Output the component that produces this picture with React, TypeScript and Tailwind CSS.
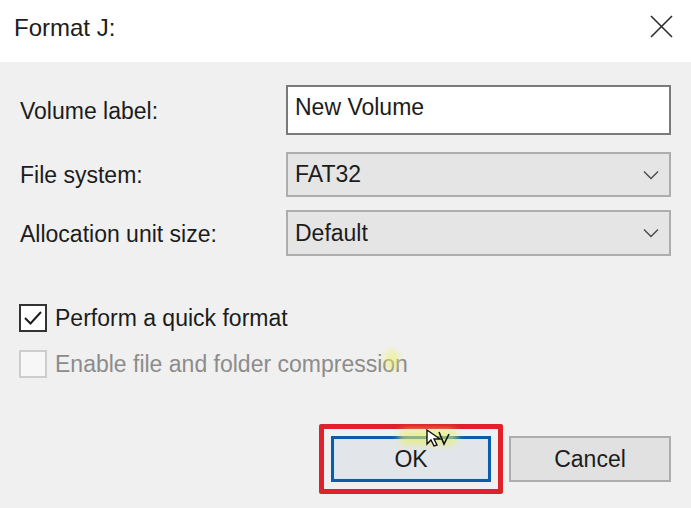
import React from "react";

const font = { fontFamily: '"Liberation Sans", Arial, sans-serif' };

function Chevron() {
  return (
    <svg width="16" height="10" viewBox="0 0 16 10" className="shrink-0">
      <path d="M1 1.5 L8 8.5 L15 1.5" fill="none" stroke="#4a4a4a" strokeWidth="1.4" />
    </svg>
  );
}

function Select({ value }: { value: string }) {
  return (
    <div className="flex-1 h-full flex items-center justify-between border-2 border-[#adadad] bg-[#e5e5e5] pl-[7px] pr-[10px]">
      <span>{value}</span>
      <Chevron />
    </div>
  );
}

function Row({ label, children, className }: { label: string; children: React.ReactNode; className: string }) {
  return (
    <div className={`flex items-center ${className}`}>
      <div className="w-[266px] shrink-0 pt-[2px]">{label}</div>
      {children}
    </div>
  );
}

export default function App() {
  return (
    <div
      className="relative w-[691px] h-[508px] overflow-hidden bg-[#f0f0f0] text-[23px] leading-none text-[#1c1c1c] flex flex-col"
      style={font}
    >
      {/* title bar */}
      <div className="h-[62px] shrink-0 bg-white flex items-center justify-between pl-[14px] pr-[18px]">
        <span className="text-[24px] text-[#202020] -mt-[7px]">Format J:</span>
        <svg width="23" height="23" viewBox="0 0 23 23" className="-mt-[9px]">
          <path d="M1 1 L22 22 M22 1 L1 22" stroke="#2b2b2b" strokeWidth="1.6" />
        </svg>
      </div>

      <div className="flex flex-col px-[20px] pt-[23px]">
        <Row label="Volume label:" className="h-[50px]">
          <div className="flex-1 h-full flex items-center border-2 border-[#7a7a7a] bg-white pl-[7px] pb-[6px]">
            New Volume
          </div>
        </Row>
        <Row label="File system:" className="h-[45px] mt-[17px]">
          <Select value="FAT32" />
        </Row>
        <Row label="Allocation unit size:" className="h-[46px] mt-[13px]">
          <Select value="Default" />
        </Row>

        <div className="flex items-center mt-[48px] h-[28px] -ml-px">
          <div className="w-[28px] h-[28px] border-2 border-[#333333] bg-white flex items-center justify-center">
            <svg width="20" height="16" viewBox="0 0 20 16">
              <path d="M2 8 L7.5 13.5 L18 2" fill="none" stroke="#1e1e1e" strokeWidth="2" />
            </svg>
          </div>
          <span className="ml-[8px]">Perform a quick format</span>
        </div>
        <div className="flex items-center mt-[18px] h-[28px] -ml-px">
          <div className="w-[28px] h-[28px] border-2 border-[#cdcdcd] bg-[#f7f7f7]" />
          <span className="ml-[8px] text-[#8c8c8c]">Enable file and folder compression</span>
        </div>

        <div className="flex items-center justify-end mt-[46px]">
          <div className="border-[5px] border-[#e0202a] rounded-[2px] px-[7px] py-[7px]">
            <button className="w-[160px] h-[46px] border-[3px] border-[#0b5cad] bg-[#e2e6ea] shadow-[inset_0_0_0_1px_#cfe6f8] flex items-center justify-center">
              OK
            </button>
          </div>
          <button className="ml-[6px] w-[162px] h-[46px] border-2 border-[#adadad] bg-[#e1e1e1] flex items-center justify-center">
            Cancel
          </button>
        </div>
      </div>

      {/* cursor trail highlights from the recording */}
      <div className="absolute left-[398px] top-[429px] w-[60px] h-[16px] rounded-full bg-[#e8f060]/60 blur-[3px]" />
      <div className="absolute left-[385px] top-[350px] w-[14px] h-[20px] rounded-full bg-[#f0f060]/50 blur-[3px]" />
      <svg className="absolute left-[424px] top-[428px]" width="28" height="20" viewBox="0 0 28 20">
        <path d="M3 2 L3 16 L7 12 L10 18 L13 17 L10 11 L16 11 Z" fill="white" stroke="#111" strokeWidth="1.4" />
        <path d="M15 4 L20 16 L25 6" fill="none" stroke="#111" strokeWidth="1.6" />
      </svg>
    </div>
  );
}
